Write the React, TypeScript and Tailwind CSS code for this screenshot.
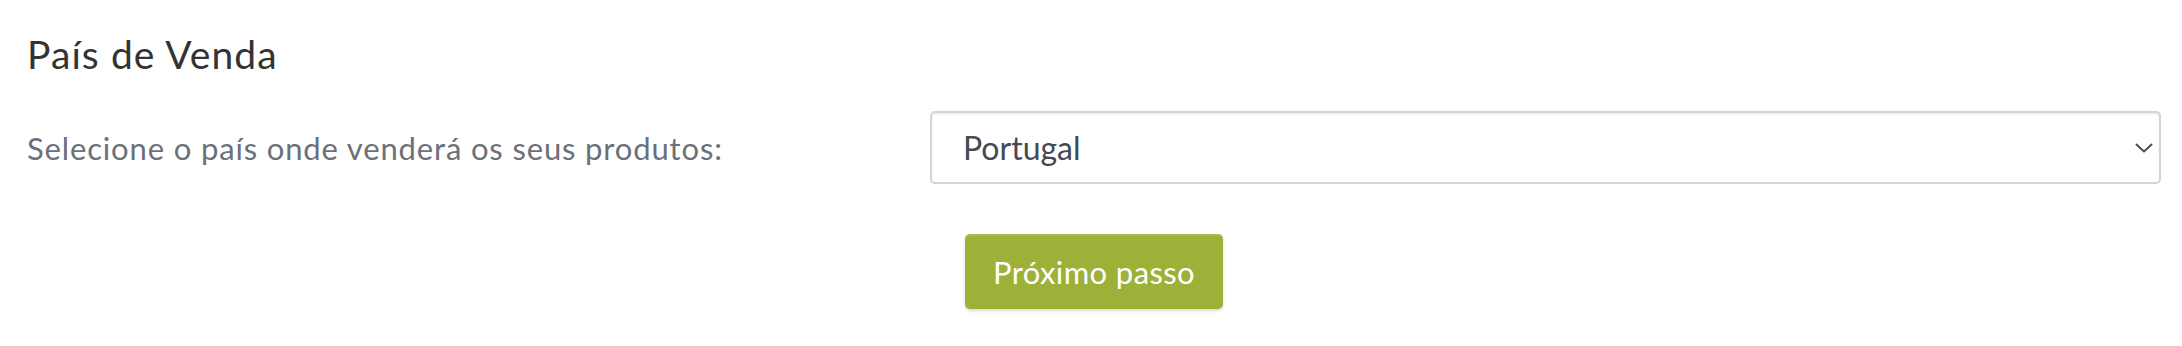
import React from "react";

export default function App() {
  return (
    <div className="w-[2182px] h-[346px] bg-white font-['Lato',sans-serif] pl-[27px] pr-[21px] pt-[30px]">
      <h2 className="text-[39px] leading-[48px] text-[#333333] font-normal tracking-[1.1px]">País de Venda</h2>
      <div className="flex items-center mt-[33px]">
        <label className="w-[903px] text-[31px] text-[#6b7079] leading-[40px] tracking-[0.85px]">
          Selecione o país onde venderá os seus produtos:
        </label>
        <div className="flex-1 h-[73px] border-2 border-[#d1d4d8] rounded-[5px] shadow-[inset_0_2px_2px_rgba(0,0,0,0.06)] flex items-center justify-between pl-[31px] pr-[6px]">
          <span className="text-[32px] text-[#454a52]">Portugal</span>
          <svg width="18" height="10" viewBox="0 0 18 10" fill="none">
            <path d="M1.5 1.5 L9 8.5 L16.5 1.5" stroke="#4a4f57" strokeWidth="2" strokeLinecap="round" strokeLinejoin="round" />
          </svg>
        </div>
      </div>
      <div className="flex mt-[50px] pl-[938px]">
        <button className="w-[258px] h-[75px] bg-[#9db139] border-t-2 border-[#a8bb4c] rounded-[5px] text-white text-[31px] tracking-[0.4px] shadow-[0_2px_3px_rgba(0,0,0,0.15)]">
          Próximo passo
        </button>
      </div>
    </div>
  );
}
